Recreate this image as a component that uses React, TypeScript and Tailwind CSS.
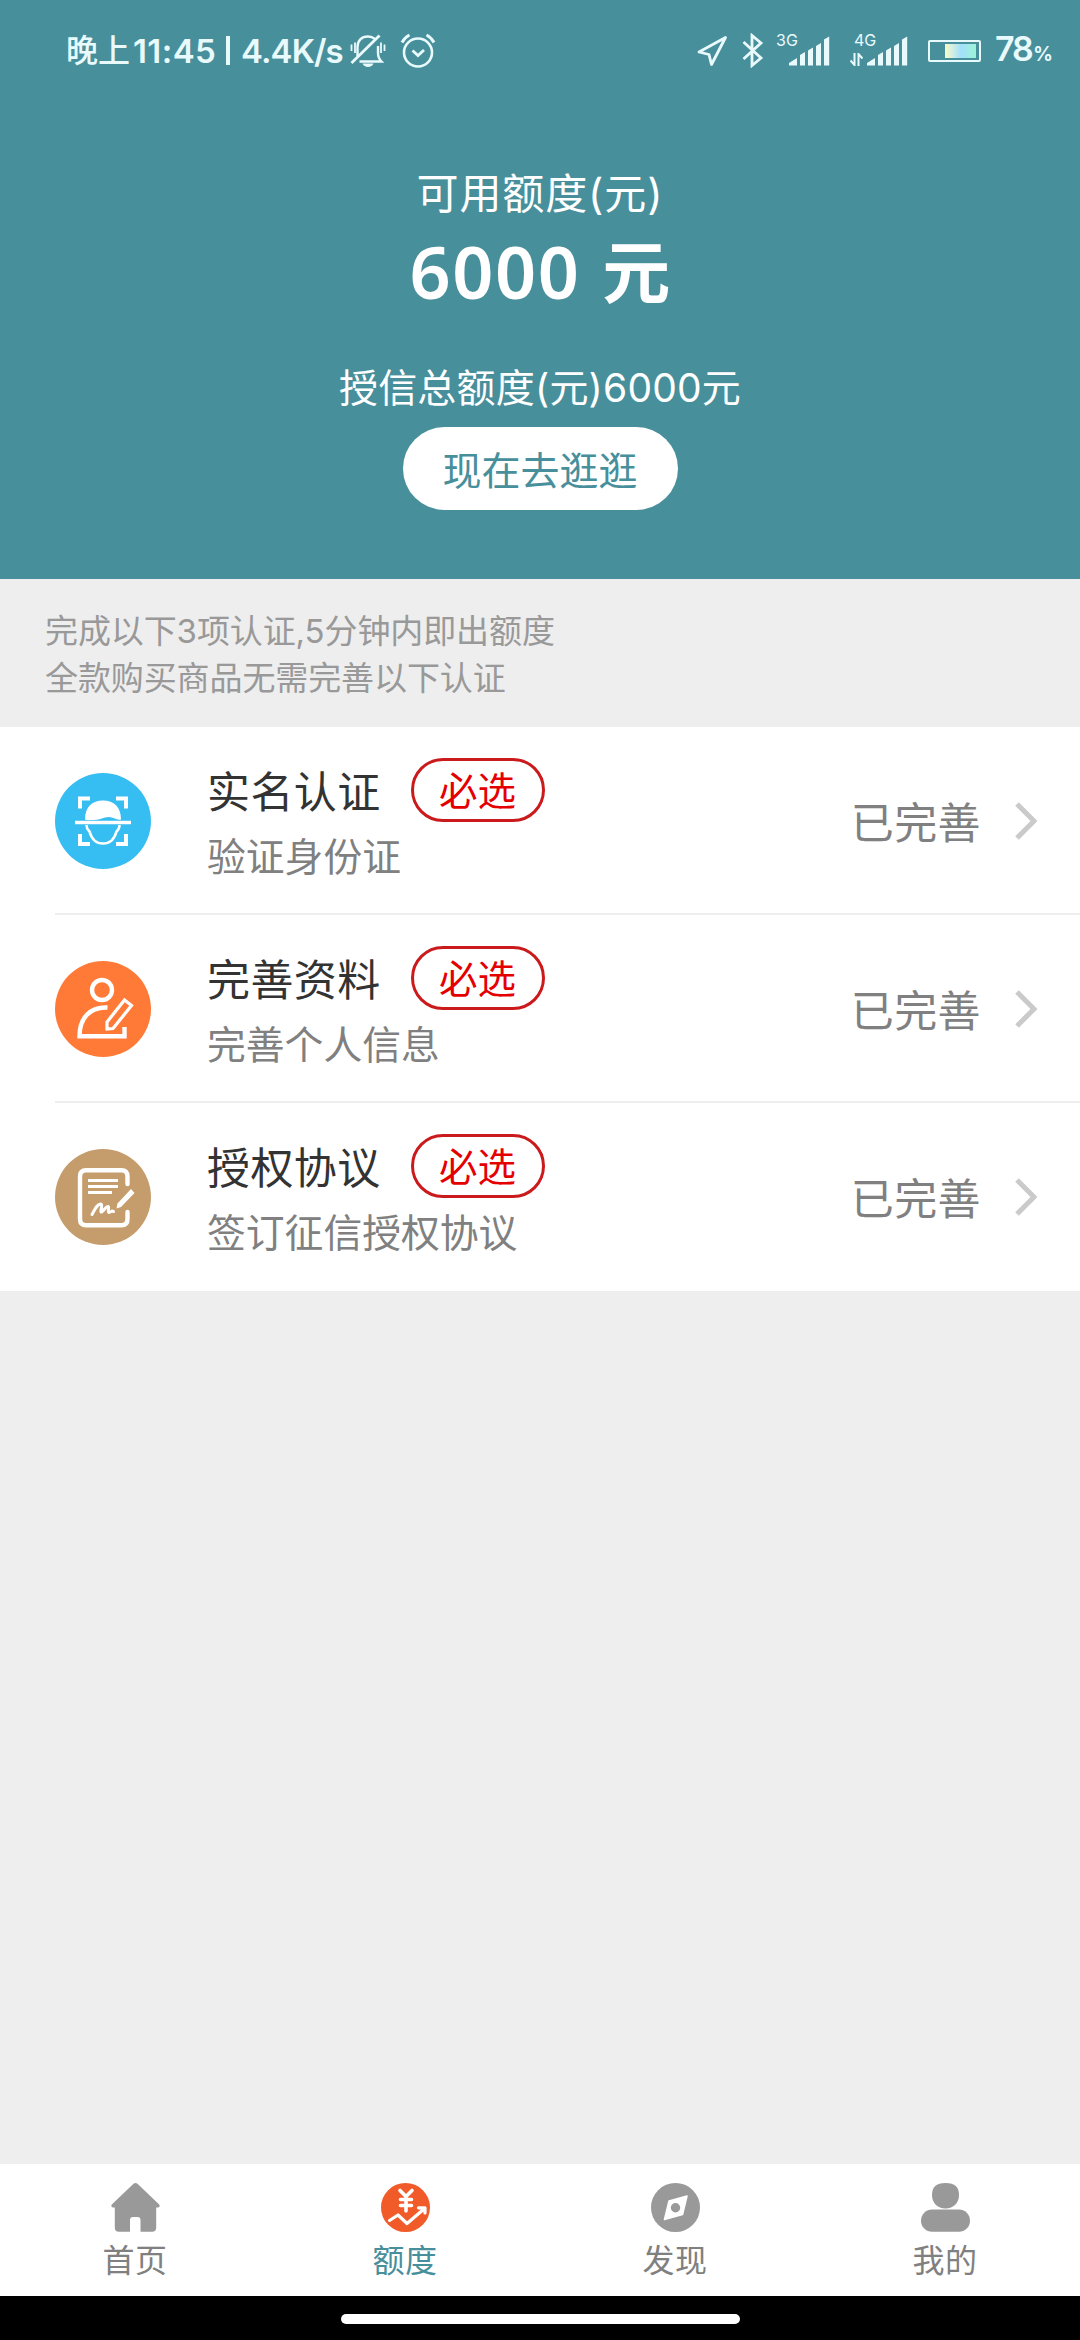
import { ReactNode } from "react";

interface AuthItem {
  title: string;
  description: string;
  status: string;
  icon: ReactNode;
}

interface TabItem {
  label: string;
  icon: ReactNode;
  active?: boolean;
}

const FaceScanIcon = () => (
  <svg className="mt-[2px] size-24" viewBox="0 0 96 96" fill="none">
    <circle cx="48" cy="48" r="48" fill="#36bdf1" />
    <g stroke="#fff" strokeWidth="4">
      <path d="M25 35.5V25.5H35M61 25.5H71V35.5M25 61V71H35M61 71H71V61" />
      <path d="M20 49.5H76" strokeWidth="3.6" />
    </g>
    <path
      d="M30 46.500C30 34 37 27.500 48 27.500S66 34 66 46.500C61.500 47.500 58 44 54 44C48 44 46 47 39 47C35 47 32 47.500 30 46.500Z"
      fill="#fff"
    />
    <path
      d="M31.500 52C31.500 56 33 57 34.500 58.500C36 64 40 70.500 48 70.500S60 64 61.500 58.500C63.500 57 64.500 55 64.500 52"
      stroke="#fff"
      strokeWidth="2.600"
    />
  </svg>
);

const ProfileEditIcon = () => (
  <svg className="mt-[2px] size-24" viewBox="0 0 96 96" fill="none">
    <circle cx="48" cy="48" r="48" fill="#ff7a36" />
    <g stroke="#fff" strokeWidth="4.400">
      <circle cx="47" cy="29" r="10" />
      <path d="M52.500 46.500C35 45.500 24.500 57 24.500 75.200H69.500V66" />
      <path d="M69.500 39L76.500 44.500L58 67.500L52 68L52 61Z" strokeWidth="3.200" />
    </g>
  </svg>
);

const AgreementIcon = () => (
  <svg className="mt-[2px] size-24" viewBox="0 0 96 96" fill="none">
    <circle cx="48" cy="48" r="48" fill="#c59c6c" />
    <g stroke="#fff" strokeWidth="4.400" strokeLinecap="round">
      <path d="M72.500 35V27.500C72.500 23.500 70.500 21.200 66.500 21.200H31C27 21.200 25 23.500 25 27.500V70C25 74 27 76.300 31 76.300H66.500C70.500 76.300 72.500 74 72.500 70V63" />
      <path
        d="M37 65.500C40 60 42 55.500 45.500 55C48.500 55 44.500 63.500 46.500 63C49 62 50.500 57.500 53 57.500C55 58 52 63 54 63.500C56 63.500 56.500 61 58.500 62.500"
        strokeWidth="3"
      />
    </g>
    <path d="M33 31.500H63M33 37.500H63M33 43.500H57" stroke="#fff" strokeWidth="3.200" />
    <path d="M76 40L79.500 44L66 58L61.500 59.500L62.500 54.500Z" fill="#fff" />
  </svg>
);

const HomeIcon = () => (
  <svg className="size-[49px]" viewBox="0 0 49 49" fill="#999">
    <path d="M22.500 0.800Q24.500 -0.600 26.500 0.800L48.200 21.500Q49.500 24 47 24.500H45.200V44.500Q45.200 48.800 41 48.800H29.500V37Q29.500 34 26.500 34H22Q19 34 19 37V48.800H8Q3.800 48.800 3.800 44.500V24.500H2Q-0.500 24 0.800 21.500Z" />
  </svg>
);

const QuotaIcon = () => (
  <svg className="size-[49px]" viewBox="0 0 49 49" fill="none">
    <circle cx="24.500" cy="24.500" r="24.500" fill="#f15a29" />
    <g stroke="#fff" strokeWidth="3.600" strokeLinecap="round" strokeLinejoin="round">
      <path d="M19 7.500L25 13.500L31 7.500M25 14V28M19.500 16.500H30.500M19.500 22.500H30.500" />
      <path d="M8.500 37.500L17 32L26 40.500L43 26M37.500 24.800H44V30" strokeWidth="3.200" />
    </g>
  </svg>
);

const DiscoverIcon = () => (
  <svg className="size-[49px]" viewBox="0 0 49 49" fill="none">
    <circle cx="24.500" cy="24.500" r="24.500" fill="#999" />
    <path
      d="M18 18L36 13L31.500 31.500L13.500 36.500Z"
      fill="#fff"
      stroke="#fff"
      strokeWidth="1.600"
      strokeLinejoin="round"
    />
    <circle cx="24.500" cy="24.700" r="4.700" fill="#999" />
  </svg>
);

const MineIcon = () => (
  <svg className="size-[49px]" viewBox="0 0 49 49" fill="#999">
    <path d="M24.500 0C34 0 38 4 38 12C38 20 32.500 25.500 24.500 25.500S11 20 11 12C11 4 15 0 24.500 0Z" />
    <rect x="0" y="26.500" width="49" height="22.300" rx="11.150" />
  </svg>
);

const MutedBellIcon = () => (
  <svg className="ml-[9px] h-[34px] w-[36px]" viewBox="0 0 36 34" fill="none" stroke="currentColor" strokeWidth="2.400">
    <path d="M7.500 22V13C7.500 6.500 11.500 2.500 18 2.500C21 2.500 23 3.300 24.800 4.800" />
    <path d="M1.500 29L29.500 1.500" strokeWidth="2.800" />
    <path d="M9.500 27.500H31.500C29 25 28 23 28 19V12" />
    <path d="M1.500 10.500V17M5 8.500V19M34.500 10.500V17M31 8.500V19" strokeWidth="1.800" />
    <path d="M12.500 29.500H23.500C22 34 14 34 12.500 29.500Z" fill="currentColor" stroke="none" />
  </svg>
);

const AlarmIcon = () => (
  <svg className="ml-[14px] h-[35px] w-[36px]" viewBox="0 0 36 35" fill="none" stroke="currentColor" strokeWidth="2.600">
    <circle cx="18" cy="19.500" r="14" />
    <path d="M2 9.500Q4.500 4.500 9.500 2M34 9.500Q31.500 4.500 26.500 2" strokeWidth="3" />
    <path d="M12.500 17.500L18 22.500L24 17" strokeWidth="2.800" />
  </svg>
);

const SignalBars = () => (
  <svg className="h-[30px] w-[41px]" viewBox="0 0 41 30" fill="currentColor">
    <path d="M0 29.500V27L8 22V29.500ZM11 29.500V19L16 16V29.500ZM19 29.500V14.500L24 11.500V29.500ZM27 29.500V10L32 7V29.500ZM35 29.500V3.500L40.200 0.500V29.500Z" />
  </svg>
);

const StatusBar = () => (
  <div className="flex h-[101px] items-center pl-[66px] pr-[28px] text-[#e9fafc]">
    <span className="text-[32px] leading-[40px] font-medium">晚上</span>
    <span className="ml-[3px] w-[82px] whitespace-nowrap text-[33px] leading-[40px] font-semibold tracking-[0.400px]">11:45</span>
    <span className="ml-[11px] h-[29px] w-1 bg-current" />
    <span className="ml-[11px] w-[100px] whitespace-nowrap text-[33px] leading-[40px] font-semibold tracking-[-0.900px]">4.4K/s</span>
    <MutedBellIcon />
    <AlarmIcon />
    <div className="ml-auto flex items-center">
      <svg className="h-[32px] w-[31px]" viewBox="0 0 31 32" fill="none" stroke="currentColor" strokeWidth="2.800" strokeLinejoin="round">
        <path d="M28.500 2.500L2 17L12 19.500L14.500 29.500Z" />
      </svg>
      <svg className="ml-[14px] h-[35px] w-[22px]" viewBox="0 0 22 35" fill="none" stroke="currentColor" strokeWidth="2.800">
        <path d="M1.500 9L19 25L10 32.500V2.500L19 10L1.500 26" />
      </svg>
      <div className="relative ml-[25px] flex">
        <SignalBars />
        <span className="absolute -top-[4px] -left-[13px] text-[16px] leading-[16px]">3G</span>
      </div>
      <div className="relative ml-[37px] flex">
        <SignalBars />
        <span className="absolute -top-[4px] -left-[13px] text-[16px] leading-[16px]">4G</span>
        <svg className="absolute top-[17px] -left-[17px] h-[13px] w-[13px]" viewBox="0 0 13 13" fill="none" stroke="currentColor" strokeWidth="2">
          <path d="M4.500 0V12L0.500 7.500M8.500 13V1L12.500 5.500" />
        </svg>
      </div>
      <div className="ml-[20px] h-[22px] w-[53px] rounded-xs border-2 border-current py-[2px] pr-[3px] pl-[15px]">
        <div className="h-full w-full bg-linear-to-r from-[#fbfbc4] via-[#a4e0fb] to-[#9cf3d6]" />
      </div>
      <div className="ml-[14px] flex w-[57px] items-baseline font-semibold whitespace-nowrap">
        <span className="pt-[2px] text-[34px] leading-[40px] tracking-[-2px]">78</span>
        <span className="ml-[1px] text-[20px] leading-[40px]">%</span>
      </div>
    </div>
  </div>
);

const Header = () => (
  <header className="h-[579px] bg-[#488f9c] text-white">
    <StatusBar />
    <div className="flex flex-col items-center pt-[63px]">
      <p className="text-[42px] leading-[60px] tracking-[0.9px]">可用额度(元)</p>
      <p className="mt-[4px] flex items-center text-[68px] leading-[90px] font-semibold">
        <span className="-mt-[5px] font-['Noto_Sans',sans-serif] text-[72px] tracking-[1.500px]">6000</span>
        <span className="ml-[22px]">元</span>
      </p>
      <p className="mt-[40px] text-[39px] leading-[60px] tracking-[0.2px]">授信总额度(元)6000元</p>
      <button className="mt-[9px] flex h-[83px] w-[275px] items-center justify-center rounded-full bg-white pt-[6px] text-[39px] text-[#488f9c]">
        现在去逛逛
      </button>
    </div>
  </header>
);

const AuthRow = ({ title, description, status, icon }: AuthItem) => (
  <div className="ml-[55px] flex h-[188px] items-center border-b-2 border-[#eee] pr-[43px] last:border-white">
    {icon}
    <div className="ml-[56px] pt-[4px]">
      <div className="flex items-center">
        <h2 className="pt-[3px] text-[43px] leading-[60px] tracking-[0.4px] text-[#333]">{title}</h2>
        <span className="ml-[30px] flex h-16 w-[134px] items-center justify-center rounded-full border-[3px] border-[#cb1a1c] pt-[4px] text-[38.500px] text-[#e50000]">
          必选
        </span>
      </div>
      <p className="mt-[6px] text-[38.800px] leading-[58px] text-[#808080]">{description}</p>
    </div>
    <span className="ml-auto pt-[6px] text-[43px] leading-[60px] tracking-[0.4px] text-[#808080]">{status}</span>
    <svg className="mt-[2px] ml-[34px] h-[38px] w-[22px]" viewBox="0 0 22 38" fill="none" stroke="#cacaca" strokeWidth="5">
      <path d="M2 2L19 19L2 36" />
    </svg>
  </div>
);

const authItems: AuthItem[] = [
  { title: "实名认证", description: "验证身份证", status: "已完善", icon: <FaceScanIcon /> },
  { title: "完善资料", description: "完善个人信息", status: "已完善", icon: <ProfileEditIcon /> },
  { title: "授权协议", description: "签订征信授权协议", status: "已完善", icon: <AgreementIcon /> },
];

const tabs: TabItem[] = [
  { label: "首页", icon: <HomeIcon /> },
  { label: "额度", icon: <QuotaIcon />, active: true },
  { label: "发现", icon: <DiscoverIcon /> },
  { label: "我的", icon: <MineIcon /> },
];

const TabBar = () => (
  <nav className="grid h-[132px] grid-cols-4 bg-white">
    {tabs.map((tab) => (
      <a key={tab.label} className="flex flex-col items-center pt-[19px]">
        {tab.icon}
        <span
          className={
            tab.active
              ? "mt-[7px] text-[32px] leading-[44px] tracking-[0.500px] text-[#488f9c]"
              : "mt-[7px] text-[32px] leading-[44px] tracking-[0.500px] text-[#808080]"
          }
        >
          {tab.label}
        </span>
      </a>
    ))}
  </nav>
);

export default function App() {
  return (
    <div className="flex h-[2340px] w-[1080px] flex-col bg-[#eee] font-['Inter','Noto_Sans_CJK_SC',sans-serif]">
      <Header />
      <div className="h-[148px] pt-[29px] pl-[45px] text-[33px] leading-[47px] tracking-[-0.1px] text-[#999]">
        <p>完成以下3项认证,5分钟内即出额度</p>
        <p>全款购买商品无需完善以下认证</p>
      </div>
      <main className="flex-1">
        <div className="bg-white">
          {authItems.map((item) => (
            <AuthRow key={item.title} {...item} />
          ))}
        </div>
      </main>
      <TabBar />
      <div className="flex h-[44px] justify-center bg-black pt-[18px]">
        <div className="h-[10px] w-[399px] rounded-full bg-white" />
      </div>
    </div>
  );
}
